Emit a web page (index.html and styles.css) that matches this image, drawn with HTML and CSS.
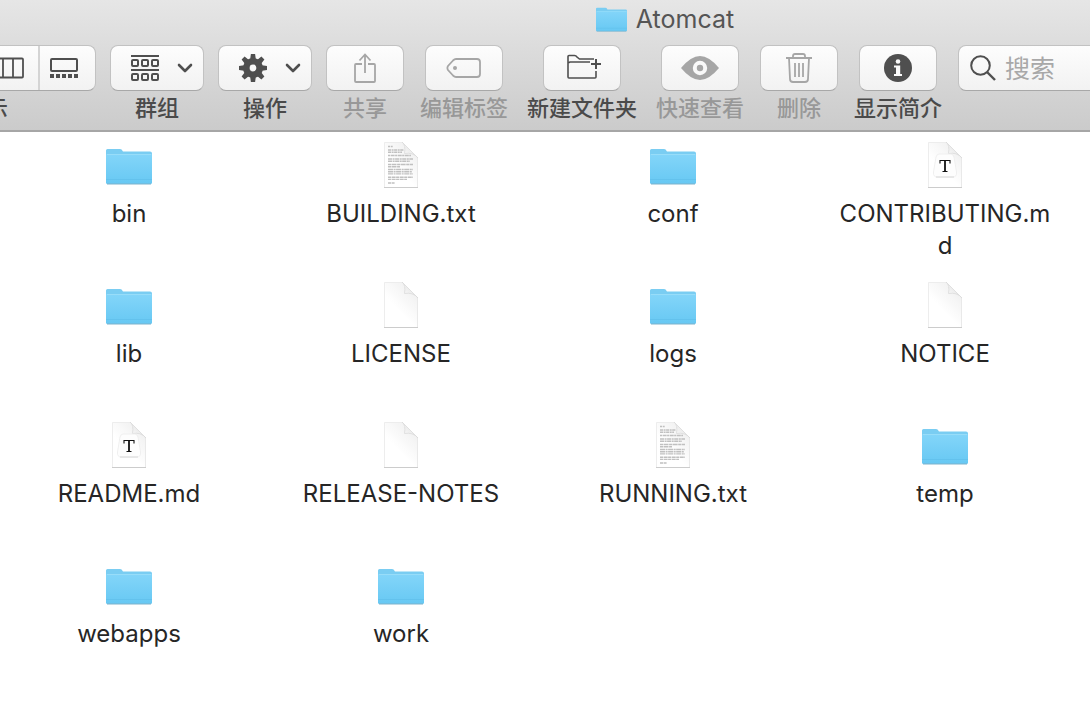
FILE: index.html
```html
<!DOCTYPE html>
<html lang="zh-CN">
<head>
<meta charset="utf-8">
<title>Atomcat</title>
<link rel="stylesheet" href="styles.css">
</head>
<body>
<svg class="defs" aria-hidden="true">
  <defs>
    <linearGradient id="folder-front" x1="0" y1="0" x2="0" y2="1">
      <stop offset="0" stop-color="#83d5f9"/>
      <stop offset="1" stop-color="#67c8f3"/>
    </linearGradient>
    <linearGradient id="curl" x1="0" y1="1" x2="1" y2="0">
      <stop offset="0" stop-color="#ffffff"/>
      <stop offset="0.5" stop-color="#ececec"/>
      <stop offset="1" stop-color="#fafafa"/>
    </linearGradient>
    <linearGradient id="sheet" x1="0.4" y1="0.6" x2="0.8" y2="0.1">
      <stop offset="0" stop-color="#ffffff"/>
      <stop offset="1" stop-color="#f0f0f0"/>
    </linearGradient>
    <symbol id="folder" viewBox="0 0 46 37">
      <path d="M0 2.500Q0 1 1.500 1H14Q15 1 15.600 1.600L17 3.500H44Q46 3.500 46 5.500V12H0z" fill="#7acdf2"/>
      <path d="M0 6H46V34.500Q46 36 44.500 36H1.500Q0 36 0 34.500z" fill="url(#folder-front)"/>
      <path d="M1 6.500H45" stroke="#98ddf9"/>
      <path d="M0 31.500H46" stroke="#5ebde9" opacity=".6"/>
      <path d="M1 36H45" stroke="#7fb3cb"/>
    </symbol>
    <symbol id="page" viewBox="0 0 36 48">
      <path d="M1 1H19L35 17V46H1z" fill="url(#sheet)"/>
      <path d="M1.500 46V1.500H19" fill="none" stroke="#ededed"/>
      <path d="M34.500 17V46" stroke="#e9e9e9"/>
      <path d="M1 46.500H35" stroke="#cccccc"/>
      <path d="M19 1Q23 4 21.500 12.500Q30 11 35 17z" fill="url(#curl)" stroke="#dadada" stroke-width=".8"/>
    </symbol>
    <symbol id="text-page" viewBox="0 0 36 48">
      <use href="#page"/>
      <g fill="none" stroke="#c0c0c0" stroke-width="1.400">
        <path d="M5 5.500H10" stroke-dasharray="2 .7"/>
        <path d="M5 9H21M5 11.200H19" stroke-dasharray="3 .6 2 .5"/>
        <path d="M5 14.500H28" stroke-dasharray="2 .6 4 .5"/>
        <path d="M5 18H30M5 20.200H27" stroke-dasharray="4 .6 2 .5"/>
        <path d="M5 23.500H30M5 25.700H17" stroke-dasharray="3 .5 5 .6"/>
        <path d="M5 28.500H30M5 30.700H29M5 32.900H30" stroke-dasharray="5 .6 2 .5"/>
        <path d="M5 36.200H30M5 38.400H24" stroke-dasharray="3 .6 4 .5"/>
        <path d="M5 42H12" stroke-dasharray="3 .6"/>
      </g>
    </symbol>
    <symbol id="markdown-page" viewBox="0 0 36 48">
      <use href="#page"/>
      <path d="M12 13H24Q26 13 27 16L29.500 31Q30 36 26 36H10Q6 36 6.500 31L9 16Q10 13 12 13z" fill="#fdfdfd" stroke="#ececec" stroke-width=".8"/>
      <path d="M9 36H27" stroke="#d8d8d8"/>
      <path d="M13 22.500V19.500H23V22.500" fill="none" stroke="#111" stroke-width="1.100"/>
      <path d="M18 19.500V30.500" stroke="#111" stroke-width="1.800"/>
      <path d="M15.500 30.500H20.500" stroke="#111"/>
    </symbol>
    <symbol id="chevron" viewBox="0 0 16 10">
      <path d="M2 2L8 8L14 2" fill="none" stroke="currentColor" stroke-width="2.600" stroke-linecap="round" stroke-linejoin="round"/>
    </symbol>
  </defs>
</svg>

<header class="window-bar">
  <h1 class="window-title">
    <svg class="title-folder"><use href="#folder"/></svg>
    <span>Atomcat</span>
  </h1>
  <div class="toolbar">
    <div class="tool">
      <div class="segments">
        <button class="segment" aria-label="图标"></button>
        <button class="segment" aria-label="列表"></button>
        <button class="segment" aria-label="分栏">
          <svg width="32" height="22" viewBox="0 0 32 22"><path d="M2 1.500H30Q31 1.500 31 2.500V19.500Q31 20.500 30 20.500H2Q1 20.500 1 19.500V2.500Q1 1.500 2 1.500zM11 1.500V20.500M21 1.500V20.500" fill="none" stroke="currentColor" stroke-width="1.800"/></svg>
        </button>
        <button class="segment" aria-label="画廊">
          <svg width="28" height="22" viewBox="0 0 28 22"><rect x="1" y="2" width="26" height="12" rx="1" fill="none" stroke="currentColor" stroke-width="2"/><path d="M0 19H28" stroke="currentColor" stroke-width="4" stroke-dasharray="4 2"/></svg>
        </button>
      </div>
      <span class="tool-label">显示</span>
    </div>
    <div class="tool">
      <button class="tool-button menu-button" aria-labelledby="l-group">
        <svg width="28" height="28" viewBox="0 0 28 28" fill="none" stroke="currentColor" stroke-width="2"><path d="M0 2H28M0 16H28"/><rect x="1" y="6" width="6" height="6" rx="1"/><rect x="11" y="6" width="6" height="6" rx="1"/><rect x="21" y="6" width="6" height="6" rx="1"/><rect x="1" y="20" width="6" height="6" rx="1"/><rect x="11" y="20" width="6" height="6" rx="1"/><rect x="21" y="20" width="6" height="6" rx="1"/></svg>
        <svg width="16" height="10"><use href="#chevron"/></svg>
      </button>
      <span class="tool-label" id="l-group">群组</span>
    </div>
    <div class="tool">
      <button class="tool-button menu-button" aria-labelledby="l-action">
        <svg width="28" height="28" viewBox="-14 -14 28 28"><circle r="6.700" fill="none" stroke="currentColor" stroke-width="6.600"/><g fill="currentColor"><path id="tooth" d="M-2.800 -9L-2.100 -14H2.100L2.800 -9V9L2.100 14H-2.100L-2.800 9z M-2.800 -5V5H2.800V-5z" fill-rule="evenodd"/><use href="#tooth" transform="rotate(45)"/><use href="#tooth" transform="rotate(90)"/><use href="#tooth" transform="rotate(135)"/></g></svg>
        <svg width="16" height="10"><use href="#chevron"/></svg>
      </button>
      <span class="tool-label" id="l-action">操作</span>
    </div>
    <div class="tool">
      <button class="tool-button" disabled aria-labelledby="l-share">
        <svg width="24" height="32" viewBox="0 0 24 32" fill="none" stroke="currentColor" stroke-width="1.800"><path d="M9 12H3Q2 12 2 13V29Q2 30 3 30H21Q22 30 22 29V13Q22 12 21 12H15M12 21V3M6.500 8.500L12 2.500L17.500 8.500"/></svg>
      </button>
      <span class="tool-label" id="l-share">共享</span>
    </div>
    <div class="tool">
      <button class="tool-button" disabled aria-labelledby="l-tag">
        <svg width="36" height="22" viewBox="0 0 36 22"><path d="M10 2H31Q34 2 34 5V17Q34 20 31 20H10Q8.500 20 7 18.500L2 13Q.8 11 2 9L7 3.500Q8.500 2 10 2z" fill="none" stroke="currentColor" stroke-width="1.800"/><circle cx="9" cy="11" r="2" fill="currentColor"/></svg>
      </button>
      <span class="tool-label" id="l-tag">编辑标签</span>
    </div>
    <div class="tool tool-wide">
      <button class="tool-button" aria-labelledby="l-new">
        <svg class="new-folder" width="36" height="26" viewBox="0 0 36 26" fill="none" stroke="currentColor" stroke-width="1.600"><path d="M28 5H13.500L11 3Q10 1.500 8.500 1.500H3Q2 1.500 2 2.500V23Q2 24 3 24H29Q30 24 30 23V17M2 9L4 8H24"/><path d="M30 5V15M25 10H35" stroke-width="2"/></svg>
      </button>
      <span class="tool-label" id="l-new">新建文件夹</span>
    </div>
    <div class="tool">
      <button class="tool-button" disabled aria-labelledby="l-look">
        <svg width="38" height="26" viewBox="0 0 38 26"><path d="M0 13Q10 1 19 1T38 13Q28 25 19 25T0 13z" fill="currentColor"/><circle cx="19" cy="13" r="5.200" fill="currentColor" stroke="#f9f9f9" stroke-width="4"/></svg>
      </button>
      <span class="tool-label" id="l-look">快速查看</span>
    </div>
    <div class="tool">
      <button class="tool-button" disabled aria-labelledby="l-delete">
        <svg width="26" height="32" viewBox="0 0 26 32" fill="none" stroke="currentColor" stroke-width="1.800"><path d="M0 6H26M7 6V4Q7 2 9 2H17Q19 2 19 4V6M3 6L4 27Q4 30 7 30H19Q22 30 22 27L23 6M9 11V25M13 11V25M17 11V25"/></svg>
      </button>
      <span class="tool-label" id="l-delete">删除</span>
    </div>
    <div class="tool">
      <button class="tool-button" aria-labelledby="l-info">
        <svg width="28" height="28" viewBox="0 0 28 28"><circle cx="14" cy="14" r="14" fill="currentColor"/><circle cx="14" cy="7.500" r="2.300" fill="#fafafa"/><path d="M10 11.500H16.200V20H18V22H10V20H12V13.500H10z" fill="#fafafa"/></svg>
      </button>
      <span class="tool-label" id="l-info">显示简介</span>
    </div>
    <label class="search">
      <svg width="26" height="26" viewBox="0 0 26 26" fill="none" stroke="currentColor" stroke-width="2"><circle cx="10.500" cy="10.500" r="9.300"/><path d="M17 17L25 25" stroke-width="2.400"/></svg>
      <input class="search-input" type="search" placeholder="搜索" aria-label="搜索">
    </label>
  </div>
</header>

<main class="files">
  <figure class="file"><svg class="file-folder"><use href="#folder"/></svg><figcaption>bin</figcaption></figure>
  <figure class="file"><svg class="file-page"><use href="#text-page"/></svg><figcaption>BUILDING.txt</figcaption></figure>
  <figure class="file"><svg class="file-folder"><use href="#folder"/></svg><figcaption>conf</figcaption></figure>
  <figure class="file"><svg class="file-page"><use href="#markdown-page"/></svg><figcaption>CONTRIBUTING.md</figcaption></figure>
  <figure class="file"><svg class="file-folder"><use href="#folder"/></svg><figcaption>lib</figcaption></figure>
  <figure class="file"><svg class="file-page"><use href="#page"/></svg><figcaption>LICENSE</figcaption></figure>
  <figure class="file"><svg class="file-folder"><use href="#folder"/></svg><figcaption>logs</figcaption></figure>
  <figure class="file"><svg class="file-page"><use href="#page"/></svg><figcaption>NOTICE</figcaption></figure>
  <figure class="file"><svg class="file-page"><use href="#markdown-page"/></svg><figcaption>README.md</figcaption></figure>
  <figure class="file"><svg class="file-page"><use href="#page"/></svg><figcaption>RELEASE-NOTES</figcaption></figure>
  <figure class="file"><svg class="file-page"><use href="#text-page"/></svg><figcaption>RUNNING.txt</figcaption></figure>
  <figure class="file"><svg class="file-folder"><use href="#folder"/></svg><figcaption>temp</figcaption></figure>
  <figure class="file"><svg class="file-folder"><use href="#folder"/></svg><figcaption>webapps</figcaption></figure>
  <figure class="file"><svg class="file-folder"><use href="#folder"/></svg><figcaption>work</figcaption></figure>
</main>
</body>
</html>
```
FILE: styles.css
```css
* {
  box-sizing: border-box;
}

body {
  margin: 0;
  overflow: hidden;
  background: #fff;
  color: #262626;
  font-family: Inter, "Noto Sans CJK SC", sans-serif;
}

.defs {
  position: absolute;
  width: 0;
  height: 0;
}

.window-bar {
  padding-bottom: 5px;
  overflow: hidden;
  background: linear-gradient(#e6e6e6, #cbcbcb);
  border-bottom: 2px solid #a6a6a6;
}

.window-title {
  display: flex;
  align-items: center;
  justify-content: center;
  gap: 9px;
  height: 38px;
  margin: 0 0 7px;
  padding-left: 240px;
  color: #555;
  font-size: 25px;
  font-weight: 400;
}

.title-folder {
  width: 31px;
  height: 25px;
}

/* The view switcher runs past the left edge of the window. */
.toolbar {
  display: flex;
  gap: 14px;
  margin-left: -124px;
}

.tool {
  display: flex;
  flex: none;
  flex-direction: column;
  align-items: center;
  color: #4a4a4a;
}

.tool-wide {
  width: 116px;
}

.tool-label {
  padding: 0 2px;
  font-size: 22px;
  font-weight: 500;
  line-height: 34px;
  white-space: nowrap;
}

.tool:has(:disabled) .tool-label {
  color: #989898;
}

.segments,
.tool-button,
.search {
  height: 46px;
  border: 1px solid #c2c2c2;
  border-bottom-color: #a8a8a8;
  border-radius: 8px;
  background: linear-gradient(#fdfdfd, #f2f2f2);
}

.segments {
  display: flex;
  width: 220px;
}

.segment {
  display: flex;
  flex: 1;
  align-items: center;
  justify-content: center;
  padding: 0 8px 0 0;
  border: 0;
  border-right: 2px solid #d4d4d4;
  background: none;
  color: #4f4f4f;
}

.segment:first-child {
  flex: 0 0 53px;
}

.segment:last-child {
  flex: 0 0 55px;
  border-right: 0;
}

.tool-button {
  display: flex;
  align-items: center;
  justify-content: center;
  width: 78px;
  padding: 0;
  color: #4f4f4f;
}

.tool-button:disabled {
  color: #a6a6a6;
}

.menu-button {
  gap: 18px;
  width: 94px;
  padding-left: 10px;
}

.new-folder {
  margin: 0 0 2px 4px;
}

.search {
  display: flex;
  flex: 1 0 240px;
  align-items: center;
  gap: 9px;
  padding-left: 11px;
  color: #4f4f4f;
}

.search-input {
  flex: 1;
  min-width: 0;
  padding: 2px 0 0;
  border: 0;
  outline: 0;
  background: none;
  font: 25px Inter, "Noto Sans CJK SC", sans-serif;
}

.search-input::placeholder {
  color: #a8a8a8;
}

.files {
  display: grid;
  grid-template-columns: repeat(auto-fill, 272px);
  grid-auto-rows: 140px;
  margin: 0 0 0 -7px;
}

.file {
  display: flex;
  flex-direction: column;
  align-items: center;
  margin: 0;
  padding-top: 9px;
}

.file-folder {
  flex: none;
  width: 46px;
  height: 37px;
  margin: 7px 0 4px;
}

.file-page {
  flex: none;
  width: 36px;
  height: 48px;
}

.file figcaption {
  width: 220px;
  margin-top: 9px;
  font-size: 24px;
  line-height: 32px;
  text-align: center;
  overflow-wrap: anywhere;
}
```
